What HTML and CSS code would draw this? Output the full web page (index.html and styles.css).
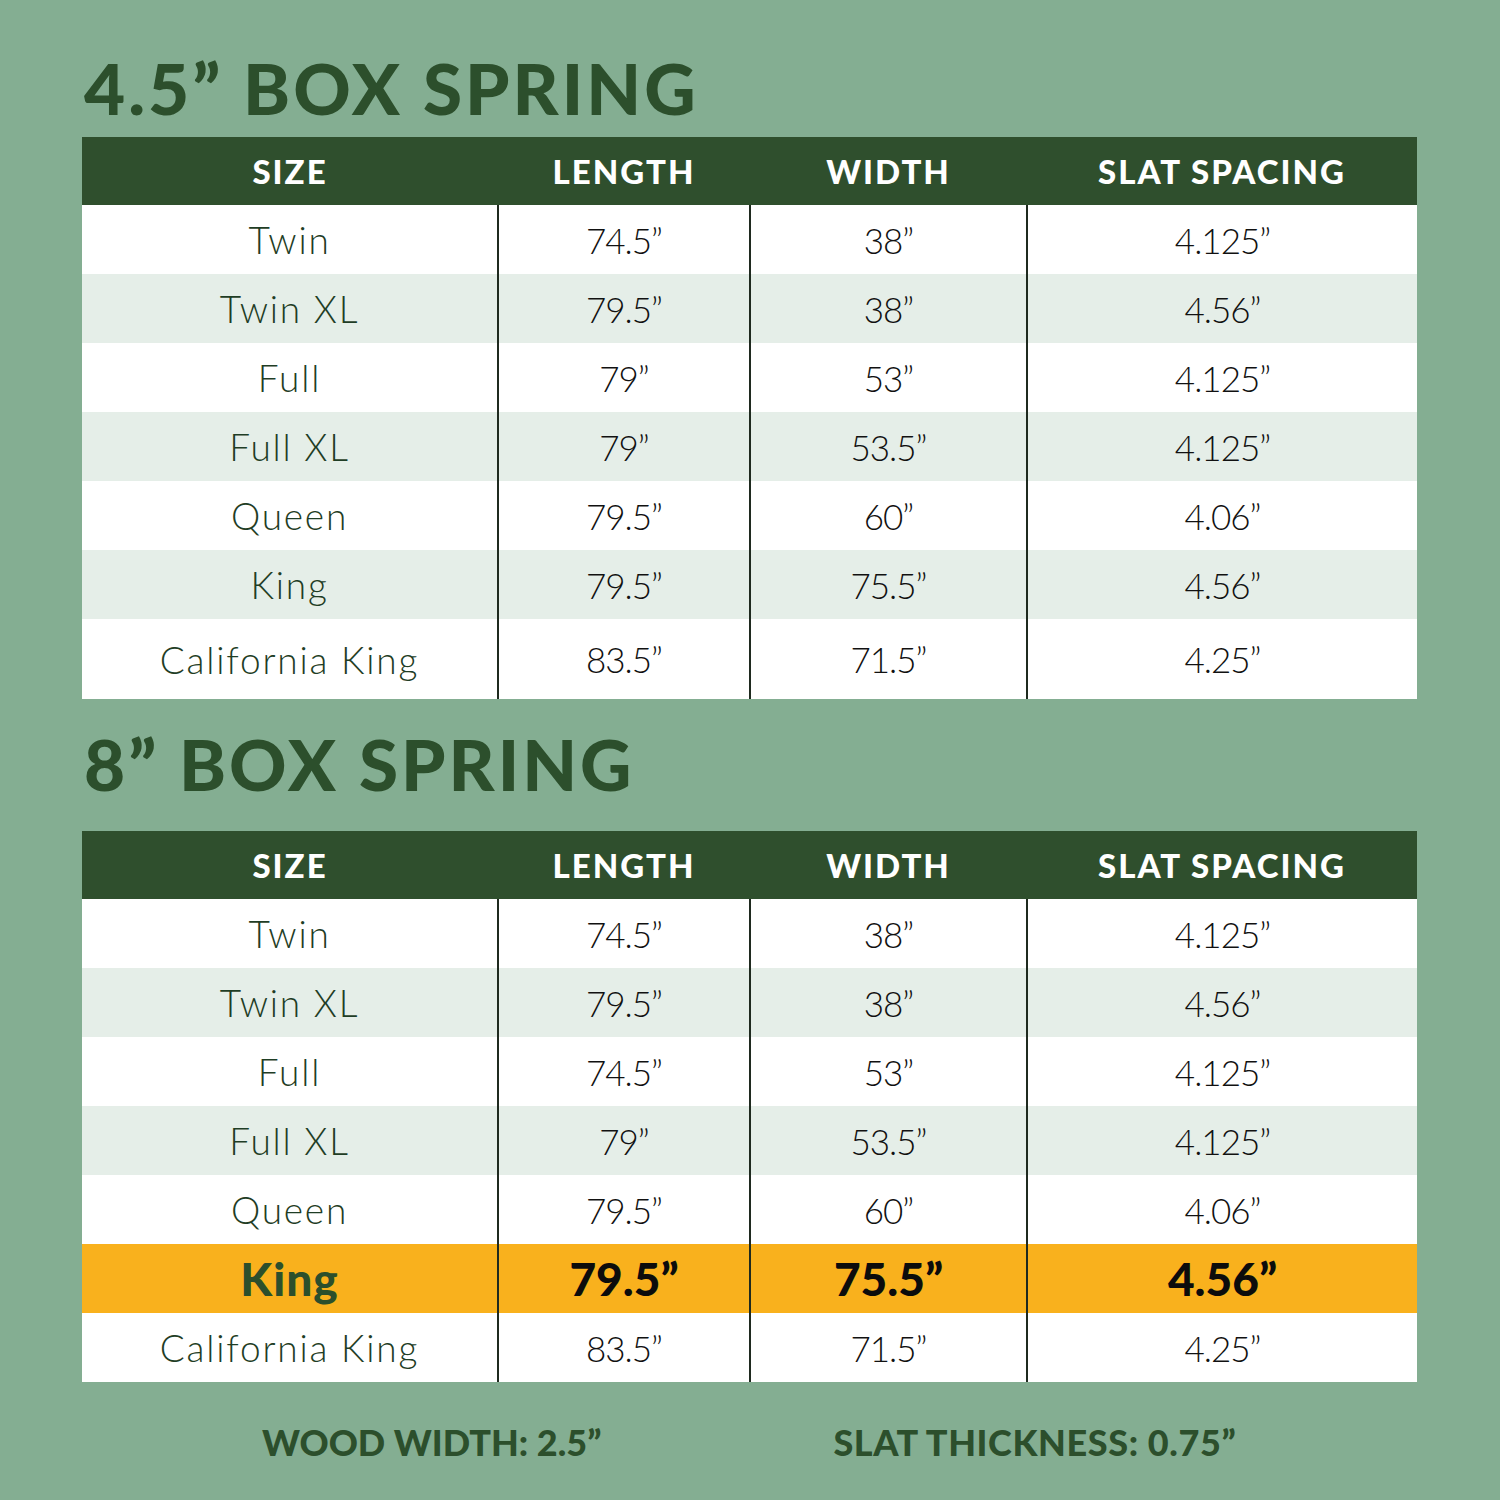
FILE: index.html
```html
<!DOCTYPE html>
<html>
<head>
<meta charset="utf-8">
<link rel="stylesheet" href="styles.css">
</head>
<body>
<div class="page">
  <section class="chart chart-first">
    <h2 class="title">4.5” BOX SPRING</h2>
    <table class="spec">
      <colgroup><col class="c1"><col class="c2"><col class="c3"><col class="c4"></colgroup>
      <thead><tr><th>SIZE</th><th>LENGTH</th><th>WIDTH</th><th>SLAT SPACING</th></tr></thead>
      <tbody>
        <tr><td class="size">Twin</td><td>74.5”</td><td>38”</td><td>4.125”</td></tr>
        <tr class="alt"><td class="size">Twin XL</td><td>79.5”</td><td>38”</td><td>4.56”</td></tr>
        <tr><td class="size">Full</td><td>79”</td><td>53”</td><td>4.125”</td></tr>
        <tr class="alt"><td class="size">Full XL</td><td>79”</td><td>53.5”</td><td>4.125”</td></tr>
        <tr><td class="size">Queen</td><td>79.5”</td><td>60”</td><td>4.06”</td></tr>
        <tr class="alt"><td class="size">King</td><td>79.5”</td><td>75.5”</td><td>4.56”</td></tr>
        <tr class="last"><td class="size">California King</td><td>83.5”</td><td>71.5”</td><td>4.25”</td></tr>
      </tbody>
    </table>
  </section>
  <section class="chart chart-second">
    <h2 class="title">8” BOX SPRING</h2>
    <table class="spec">
      <colgroup><col class="c1"><col class="c2"><col class="c3"><col class="c4"></colgroup>
      <thead><tr><th>SIZE</th><th>LENGTH</th><th>WIDTH</th><th>SLAT SPACING</th></tr></thead>
      <tbody>
        <tr><td class="size">Twin</td><td>74.5”</td><td>38”</td><td>4.125”</td></tr>
        <tr class="alt"><td class="size">Twin XL</td><td>79.5”</td><td>38”</td><td>4.56”</td></tr>
        <tr><td class="size">Full</td><td>74.5”</td><td>53”</td><td>4.125”</td></tr>
        <tr class="alt"><td class="size">Full XL</td><td>79”</td><td>53.5”</td><td>4.125”</td></tr>
        <tr><td class="size">Queen</td><td>79.5”</td><td>60”</td><td>4.06”</td></tr>
        <tr class="hl"><td class="size">King</td><td>79.5”</td><td>75.5”</td><td>4.56”</td></tr>
        <tr><td class="size">California King</td><td>83.5”</td><td>71.5”</td><td>4.25”</td></tr>
      </tbody>
    </table>
  </section>
  <footer class="notes">
    <span class="note note-left">WOOD WIDTH: 2.5”</span>
    <span class="note note-right">SLAT THICKNESS: 0.75”</span>
  </footer>
</div>
</body>
</html>
```
FILE: styles.css
```css
html, body {
  margin: 0;
  padding: 0;
}
body {
  width: 1500px;
  height: 1500px;
  background: #84ae92;
  font-family: "Lato", "Noto Sans", sans-serif;
  overflow: hidden;
}
.page {
  padding-left: 82px;
  width: 1335px;
}
.chart-first {
  padding-top: 38px;
}
.title {
  margin: 0;
  color: #2c4f2c;
  font-family: "Lato", sans-serif;
  font-weight: 900;
  font-size: 71px;
  line-height: 99px;
  height: 99px;
  padding-left: 2px;
  letter-spacing: 3px;
}
.chart-second .title {
  height: 132px;
  line-height: 130px;
}
.spec {
  width: 1335px;
  border-collapse: collapse;
  table-layout: fixed;
}
.c1 { width: 416px; }
.c2 { width: 252px; }
.c3 { width: 277px; }
.c4 { width: 390px; }
.spec th {
  background: #2f4f2d;
  color: #ffffff;
  font-weight: 900;
  font-size: 33px;
  height: 68px;
  padding: 0;
  text-align: center;
  letter-spacing: 2px;
}
.spec td {
  background: #ffffff;
  height: 69px;
  padding: 0;
  text-align: center;
  font-weight: 300;
  font-size: 35px;
  letter-spacing: -1px;
  color: #111111;
  border-left: 2px solid #1f2a1f;
}
.spec td:first-child {
  border-left: none;
}
.spec td.size {
  color: #1f3d25;
  font-size: 37px;
  letter-spacing: 1.8px;
}
.spec tr.alt td {
  background: #e5eee8;
}
.spec tr.last td {
  height: 80px;
}
.spec tr.hl td {
  background: #f9b11d;
  font-weight: 900;
  font-size: 46px;
  letter-spacing: 0;
  color: #0c0c0c;
}
.spec tr.hl td.size {
  color: #2c4f2c;
  letter-spacing: 1px;
}
.notes {
  display: flex;
  height: 120px;
  align-items: center;
}
.note {
  color: #2c4f2c;
  font-weight: 900;
  font-size: 36px;
}
.note-left {
  margin-left: 180px;
}
.note-right {
  margin-left: 232px;
  letter-spacing: 0.6px;
}
```
